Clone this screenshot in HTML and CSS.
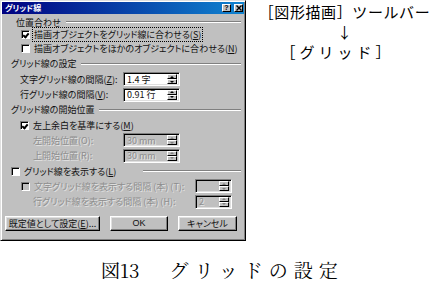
FILE: index.html
```html
<!DOCTYPE html>
<html lang="ja">
<head>
  <meta charset="UTF-8" />
  <title>グリッドの設定</title>
  <link rel="stylesheet" href="styles.css">
</head>
<body>
  <div class="sheet">
    <div class="dialog">
      <div class="titlebar">
        <span class="title">グリッド線</span>
        <div class="tbtns">
          <span class="tbtn">?</span>
          <span class="tbtn"><svg width="6" height="6" viewBox="0 0 6 6"><path d="M0.5 0.5L5.5 5.5M5.5 0.5L0.5 5.5" stroke="#000" stroke-width="1.4"/></svg></span>
        </div>
      </div>

      <div class="body">
        <div class="row r-first group pad-g1"><span>位置合わせ</span><i class="rule"></i></div>
        <div class="row r-second pad-1"><span class="cb on"></span><span class="lbl focus">描画オブジェクトをグリッド線に合わせる(<u>S</u>)</span></div>
        <div class="row pad-1"><span class="cb"></span><span class="lbl">描画オブジェクトをほかのオブジェクトに合わせる(<u>N</u>)</span></div>

        <div class="row group pad-g"><span>グリッド線の設定</span><i class="rule"></i></div>
        <div class="row frow">
          <span class="pad-1b">文字グリッド線の間隔(<u>Z</u>):</span>
          <div class="field"><span class="val">1.4 字</span><div class="spin"><b class="up"></b><b class="dn"></b></div></div>
        </div>
        <div class="row frow">
          <span class="pad-1b">行グリッド線の間隔(<u>V</u>):</span>
          <div class="field"><span class="val">0.91 行</span><div class="spin"><b class="up"></b><b class="dn"></b></div></div>
        </div>

        <div class="row group pad-g"><span>グリッド線の開始位置</span><i class="rule"></i></div>
        <div class="row pad-1b"><span class="cb on"></span><span class="lbl">左上余白を基準にする(<u>M</u>)</span></div>
        <div class="row frow off">
          <span class="pad-2">左開始位置(O):</span>
          <div class="field dis"><span class="val">30 mm</span><div class="spin"><b class="up"></b><b class="dn"></b></div></div>
        </div>
        <div class="row frow off">
          <span class="pad-2">上開始位置(R):</span>
          <div class="field dis"><span class="val">30 mm</span><div class="spin"><b class="up"></b><b class="dn"></b></div></div>
        </div>

        <div class="row pad-g"><span class="cb"></span><span class="lbl">グリッド線を表示する(<u>L</u>)</span><i class="rule rule-far"></i></div>
        <div class="row frow frow-wide off">
          <span class="pad-1 inl"><span class="cb dis-cb"></span><span class="lbl">文字グリッド線を表示する間隔 (本) (T):</span></span>
          <div class="field dis"><span class="val"></span><div class="spin"><b class="up"></b><b class="dn"></b></div></div>
        </div>
        <div class="row frow frow-wide off">
          <span class="pad-2">行グリッド線を表示する間隔 (本) (H):</span>
          <div class="field dis"><span class="val">2</span><div class="spin"><b class="up"></b><b class="dn"></b></div></div>
        </div>
      </div>

      <div class="buttons">
        <span class="btn btn-wide">既定値として設定(<u>E</u>)...</span>
        <span class="btn btn-ok">OK</span>
        <span class="btn btn-cancel">キャンセル</span>
      </div>
    </div>

    <div class="note">
      <div class="note-first">［図形描画］ツールバー</div>
      <div>↓</div>
      <div class="note-last">［グリッド］</div>
    </div>
  </div>

  <div class="caption"><span>図13</span>　<span class="cap-title">グリッドの設定</span></div>
</body>
</html>
```

FILE: styles.css
```css
* { box-sizing: border-box; }
body {
  margin: 0;
  background: #fff;
  color: #000;
  font-family: "Noto Sans CJK JP", sans-serif;
}
.sheet {
  display: flex;
  height: 260px;
}

/* dialog */
.dialog {
  width: 246px;
  height: 241px;
  background: #c0c0c0;
  border: 1px solid;
  border-color: #dfdfdf #000 #000 #dfdfdf;
  box-shadow: inset 1px 1px #fff, inset -1px -1px #808080;
  padding: 1px;
  display: flex;
  flex-direction: column;
  font-size: 9px;
  color: #111;
  font-feature-settings: "palt";
}
.titlebar {
  height: 12px;
  background: linear-gradient(90deg, #000080, #1084d0);
  color: #fff;
  display: flex;
  align-items: center;
  justify-content: space-between;
  padding: 0 1px 0 3px;
}
.title {
  font-weight: bold;
  font-size: 8px;
  line-height: 1;
}
.tbtns {
  display: flex;
  gap: 3px;
}
.tbtn {
  width: 9px;
  height: 8px;
  background: #c0c0c0;
  border: 1px solid;
  border-color: #fff #000 #000 #fff;
  color: #000;
  font: bold 7px/6px "Liberation Sans", sans-serif;
  display: flex;
  align-items: center;
  justify-content: center;
}

.body {
  padding: 2px 3px 0 0;
  display: flex;
  flex-direction: column;
}
.row {
  height: 15.3px;
  display: flex;
  align-items: center;
  white-space: nowrap;
}
.r-first { height: 12px; }
.r-second { height: 13px; }
.pad-g { padding-left: 9px; }
.pad-g1 { padding-left: 14px; }
.pad-1 { padding-left: 19px; }
.pad-1b { padding-left: 18px; }
.pad-2 { padding-left: 31px; }
.inl {
  display: flex;
  align-items: center;
}
.rule {
  flex: 1;
  height: 2px;
  margin-left: 5px;
  border-top: 1px solid #808080;
  border-bottom: 1px solid #fff;
}
.rule-far { margin-left: 26px; }
u { text-decoration: underline; text-underline-offset: 1px; }

.cb {
  width: 9px;
  height: 9px;
  margin-right: 3px;
  background: #fff;
  border: 1px solid;
  border-color: #808080 #fff #fff #808080;
  box-shadow: inset 1px 1px #000;
  flex: none;
  position: relative;
}
.cb.on::after {
  content: "";
  position: absolute;
  left: 2px;
  top: 1px;
  width: 2px;
  height: 4px;
  border: solid #000;
  border-width: 0 2px 2px 0;
  transform: rotate(40deg);
}
.dis-cb { background: #c0c0c0; }
.lbl { padding: 0 1px; }
.focus { outline: 1px dotted #000; outline-offset: 0; }

.frow {
  display: grid;
  grid-template-columns: 121px 57px;
  align-items: center;
}
.frow-wide { grid-template-columns: 193px 37px; }
.off { color: #8e8e8e; text-shadow: 1px 1px 0 #e4e4e4; }

.field {
  height: 14px;
  background: #fff;
  border: 1px solid;
  border-color: #808080 #fff #fff #808080;
  box-shadow: inset 1px 1px #000, inset -1px -1px #dfdfdf;
  padding: 2px;
  display: flex;
  align-items: center;
  justify-content: space-between;
}
.field.dis { background: #c0c0c0; }
.val { padding-left: 1px; line-height: 1; }
.spin {
  width: 10px;
  height: 10px;
  display: flex;
  flex-direction: column;
}
.spin b {
  flex: 1;
  background: #c0c0c0;
  border: 1px solid;
  border-color: #fff #000 #000 #fff;
  display: flex;
  align-items: center;
  justify-content: center;
}
.spin b::after {
  content: "";
  border-left: 2px solid transparent;
  border-right: 2px solid transparent;
}
.spin .up::after { border-bottom: 2px solid #000; }
.spin .dn::after { border-top: 2px solid #000; }
.dis .spin b::after { border-top-color: #808080; border-bottom-color: #808080; }
.dis .spin .up::after { border-top: 0; }
.dis .spin .dn::after { border-bottom: 0; }

.buttons {
  margin-top: 7px;
  padding-left: 3px;
  display: flex;
  gap: 10px;
}
.btn {
  height: 15px;
  background: #c0c0c0;
  border: 1px solid;
  border-color: #fff #000 #000 #fff;
  box-shadow: inset -1px -1px #808080, inset 1px 1px #dfdfdf;
  display: flex;
  align-items: center;
  justify-content: center;
  line-height: 1;
}
.btn-wide { width: 95px; }
.btn-ok { width: 58px; font-family: "Liberation Sans", sans-serif; }
.btn-cancel { width: 59px; }

/* side note */
.note {
  width: 177px;
  margin-left: 10px;
  padding-top: 2px;
  font-size: 15px;
  line-height: 20px;
  text-align: center;
}
.note-first { letter-spacing: 0.6px; }
.note-last {
  padding-right: 14px;
  letter-spacing: 4px;
}

.caption {
  padding-left: 101px;
  font-family: "Noto Serif CJK JP", "Liberation Serif", "Noto Sans CJK JP", serif;
  font-size: 19px;
  line-height: 19px;
  white-space: nowrap;
}
.cap-title {
  margin-left: 11px;
  letter-spacing: 6px;
}
```
